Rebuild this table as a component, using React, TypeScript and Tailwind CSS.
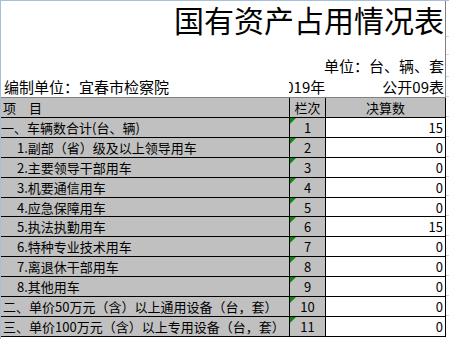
type Row = {
  label: string;
  indent: string;
  no: number;
  value: number;
  h?: string;
};

const ROWS: Row[] = [
  { label: "一、车辆数合计(台、辆)", indent: "pl-0", no: 1, value: 15 },
  { label: "1.副部（省）级及以上领导用车", indent: "pl-[16px]", no: 2, value: 0 },
  { label: "2.主要领导干部用车", indent: "pl-[16px]", no: 3, value: 0 },
  { label: "3.机要通信用车", indent: "pl-[16px]", no: 4, value: 0 },
  { label: "4.应急保障用车", indent: "pl-[16px]", no: 5, value: 0, h: "h-[19px]" },
  { label: "5.执法执勤用车", indent: "pl-[16px]", no: 6, value: 15 },
  { label: "6.特种专业技术用车", indent: "pl-[16px]", no: 7, value: 0 },
  { label: "7.离退休干部用车", indent: "pl-[16px]", no: 8, value: 0 },
  { label: "8.其他用车", indent: "pl-[16px]", no: 9, value: 0 },
  { label: "二、单价50万元（含）以上通用设备（台，套）", indent: "pl-[2px]", no: 10, value: 0 },
  { label: "三、单价100万元（含）以上专用设备（台，套）", indent: "pl-[2px]", no: 11, value: 0 },
];

const FONT = "font-['Noto_Sans_CJK_SC',sans-serif]";

function DataRow({ row }: { row: Row }) {
  return (
    <div className={`flex ${row.h ?? "h-[20px]"} border-b border-black text-[13px] leading-[13px]`}>
      <div className={`flex w-[289px] items-center whitespace-nowrap border-r border-black bg-[#c0c0c0] ${row.indent}`}>
        {row.label}
      </div>
      <div className="relative flex w-[36px] items-center justify-center border-r border-black bg-[#c0c0c0]">
        <span className="absolute left-0 top-0 h-0 w-0 border-r-[6px] border-t-[6px] border-r-transparent border-t-[#0a8a0a]" />
        {row.no}
      </div>
      <div className="flex w-[120px] items-center justify-end border-r border-black bg-white pr-[2px]">
        {row.value}
      </div>
    </div>
  );
}

export default function App() {
  return (
    <div className={`flex h-[339px] w-[449px] overflow-hidden border-l border-t border-[#a6bfdd] bg-white text-black ${FONT}`}>
      <div className="flex w-[445px] flex-col">
        <div className="flex h-[96px] flex-col border-r border-[#808080]">
          <div className="flex h-[36px] justify-end pr-[1px] pt-[3px] text-[30px] leading-[30px]">
            国有资产占用情况表
          </div>
          <div className="h-[18px]" />
          <div className="flex h-[22px] items-end justify-end pb-[3px] pr-[1px] text-[15px] leading-[16px]">
            单位：台、辆、套
          </div>
          <div className="flex h-[20px] items-end pb-[2px] text-[15px] leading-[16px]">
            <div className="w-[289px] pl-[3px]">编制单位：宜春市检察院</div>
            <div className="flex w-[36px] justify-end overflow-hidden whitespace-nowrap">
              2019年
            </div>
            <div className="flex w-[120px] justify-end pr-[1px]">公开09表</div>
          </div>
        </div>

        <div className="flex h-[21px] border-b border-t border-b-black border-t-[#808080] text-[13px] leading-[13px]">
          <div className="flex w-[289px] items-center border-r border-black bg-[#c0c0c0] pl-[2px]">
            项　目
          </div>
          <div className="flex w-[36px] items-center justify-center border-r border-black bg-[#c0c0c0]">
            栏次
          </div>
          <div className="flex w-[120px] items-center justify-center border-r border-black bg-[#c0c0c0]">
            决算数
          </div>
        </div>

        {ROWS.map((row) => (
          <DataRow key={row.no} row={row} />
        ))}
      </div>

      <div className="flex w-[3px] flex-col">
        <div className="h-[36px] border-b border-[#d4d4d4]" />
        <div className="h-[18px] border-b border-[#d4d4d4]" />
        <div className="h-[22px] border-b border-[#d4d4d4]" />
        <div className="h-[20px] border-b border-[#d4d4d4]" />
        {ROWS.map((row) => (
          <div key={row.no} className={`${row.h ?? "h-[20px]"} border-b border-[#d4d4d4]`} />
        ))}
      </div>
    </div>
  );
}
